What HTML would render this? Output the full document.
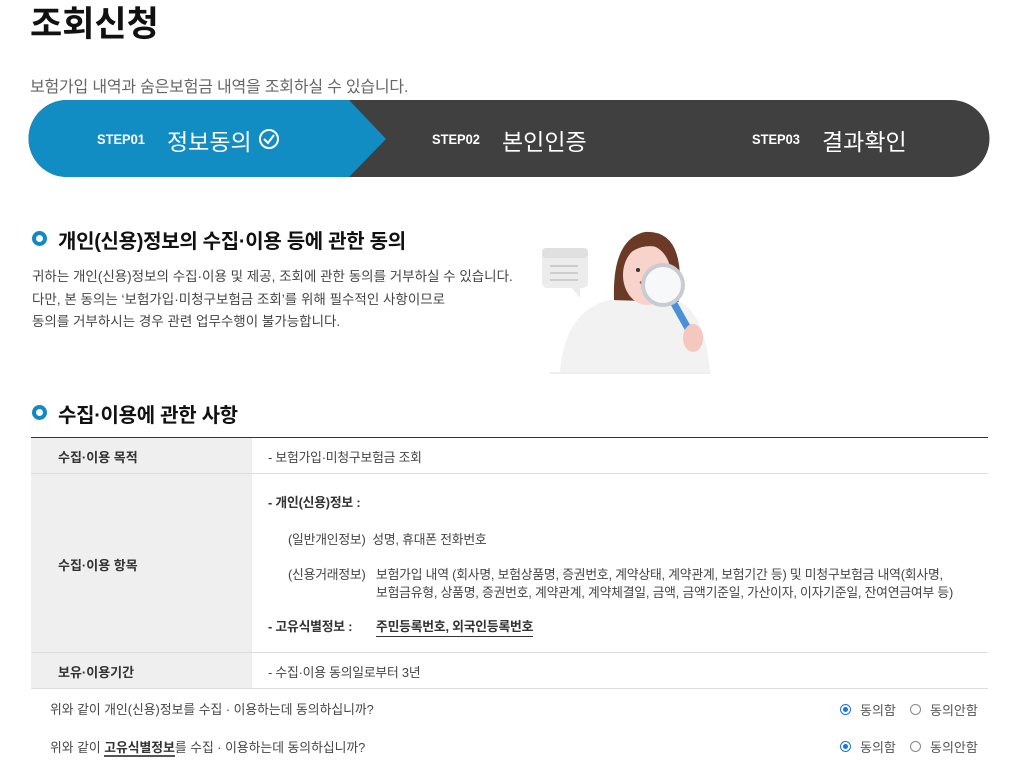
<!DOCTYPE html>
<html><head><meta charset="utf-8"><style>
*{margin:0;padding:0;box-sizing:border-box}
body{width:1024px;height:764px;overflow:hidden;background:#fff;font-family:"Liberation Sans","Noto Sans CJK KR",sans-serif;color:#222;position:relative}
.a{position:absolute;white-space:nowrap}
.h2{font-size:20px;font-weight:bold;color:#111;letter-spacing:-0.3px}
.dot{position:absolute;width:15px;height:15px;border-radius:50%;border:4px solid #0f8ac4}
.p{font-size:13px;color:#444}
.t{font-size:12.8px;color:#444;letter-spacing:-0.2px}
.lab{font-size:13px;font-weight:bold;color:#333}
.radio{position:absolute;width:11px;height:11px;border-radius:50%;border:1px solid #888;background:#fff}
.radio.on{border-color:#1a73e8}
.radio.on::after{content:"";position:absolute;left:2px;top:2px;width:5px;height:5px;border-radius:50%;background:#1a73e8}
</style></head><body>
<div class="a" style="left:30px;top:-4px;font-size:35px;font-weight:bold;color:#111">조회신청</div>
<div class="a" style="left:30px;top:73px;font-size:16px;color:#666;letter-spacing:-0.2px">보험가입 내역과 숨은보험금 내역을 조회하실 수 있습니다.</div>
<svg class="a" style="left:0;top:0" width="1024" height="190">
<path d="M67,100 H951 A38.5,38.5 0 0 1 951,177 H67 A38.5,38.5 0 0 1 67,100Z" fill="#404040"/>
<path d="M67,100 H349 L386,139 L349,177 H67 A38.5,38.5 0 0 1 67,100Z" fill="#118dc4"/>
<circle cx="269" cy="139" r="9" fill="none" stroke="#fff" stroke-width="2"/>
<path d="M264,139 L268,143 L274,135" fill="none" stroke="#fff" stroke-width="2"/>
</svg>
<div class="a" style="left:97px;top:131px;font-size:14px;font-weight:bold;color:#fff;transform:scaleX(.92);transform-origin:left">STEP01</div>
<div class="a" style="left:167px;top:123px;font-size:23px;color:#fff">정보동의</div>
<div class="a" style="left:432px;top:131px;font-size:14px;font-weight:bold;color:#fff;transform:scaleX(.92);transform-origin:left">STEP02</div>
<div class="a" style="left:502px;top:123px;font-size:23px;color:#fff">본인인증</div>
<div class="a" style="left:752px;top:131px;font-size:14px;font-weight:bold;color:#fff;transform:scaleX(.92);transform-origin:left">STEP03</div>
<div class="a" style="left:822px;top:123px;font-size:23px;color:#fff">결과확인</div>

<div class="dot" style="left:32px;top:231px"></div>
<div class="a h2" style="left:58px;top:225px">개인(신용)정보의 수집·이용 등에 관한 동의</div>
<div class="a p" style="left:32px;top:265px;font-size:13.5px">귀하는 개인(신용)정보의 수집·이용 및 제공, 조회에 관한 동의를 거부하실 수 있습니다.</div>
<div class="a p" style="left:32px;top:288px;font-size:13.5px">다만, 본 동의는 ‘보험가입·미청구보험금 조회’를 위해 필수적인 사항이므로</div>
<div class="a p" style="left:32px;top:310px;font-size:13.5px">동의를 거부하시는 경우 관련 업무수행이 불가능합니다.</div>

<svg class="a" style="left:530px;top:220px" width="190" height="160">
<rect x="12" y="28" width="46" height="40" rx="5" fill="#ececec"/>
<path d="M42,68 L50,78 L50,68Z" fill="#ececec"/>
<rect x="12" y="28" width="46" height="10" rx="4" fill="#e0e0e0"/>
<rect x="20" y="45" width="28" height="2" fill="#ccc"/><rect x="20" y="52" width="28" height="2" fill="#ccc"/><rect x="20" y="59" width="28" height="2" fill="#ccc"/>
<path d="M85,95 Q78,20 115,12 Q150,10 150,60 L148,90 Z" fill="#6b3a26"/>
<path d="M30,152 Q35,90 80,80 L150,82 Q175,95 180,152Z" fill="#f2f2f2"/>
<ellipse cx="117" cy="55" rx="24" ry="30" fill="#f7d3cc"/>
<path d="M92,40 Q115,15 145,35 Q135,22 115,20 Q95,25 92,40Z" fill="#6b3a26"/>
<circle cx="108" cy="50" r="2" fill="#333"/><circle cx="125" cy="50" r="2" fill="#333"/>
<path d="M110,62 Q116,66 122,62" stroke="#c33" stroke-width="2" fill="none"/>
<path d="M142,80 L160,112" stroke="#4a90d9" stroke-width="7" stroke-linecap="round"/>
<circle cx="133" cy="65" r="20" fill="#f6f8fa" stroke="#c8ccd2" stroke-width="4"/>
<ellipse cx="163" cy="118" rx="10" ry="14" fill="#f4c7bf"/>
<rect x="20" y="152" width="160" height="2" fill="#eee"/>
</svg>

<div class="dot" style="left:32px;top:405px"></div>
<div class="a h2" style="left:58px;top:399px">수집·이용에 관한 사항</div>

<div class="a" style="left:31px;top:437px;width:957px;height:251px;border-top:1px solid #333"></div>
<div class="a" style="left:31px;top:438px;width:221px;height:250px;background:#efefef"></div>
<div class="a" style="left:31px;top:473px;width:957px;border-top:1px solid #ddd"></div>
<div class="a" style="left:31px;top:652px;width:957px;border-top:1px solid #ddd"></div>
<div class="a" style="left:31px;top:688px;width:957px;border-top:1px solid #ddd"></div>
<div class="a lab" style="left:58px;top:447px">수집·이용 목적</div>
<div class="a lab" style="left:58px;top:555px">수집·이용 항목</div>
<div class="a lab" style="left:58px;top:662px">보유·이용기간</div>
<div class="a t" style="left:268px;top:447px">- 보험가입·미청구보험금 조회</div>
<div class="a t" style="left:268px;top:492px;font-weight:bold;color:#333">- 개인(신용)정보 :</div>
<div class="a t" style="left:288px;top:529px">(일반개인정보)&nbsp; 성명, 휴대폰 전화번호</div>
<div class="a t" style="left:288px;top:564px">(신용거래정보)</div>
<div class="a t" style="left:376px;top:564px">보험가입 내역 (회사명, 보험상품명, 증권번호, 계약상태, 계약관계, 보험기간 등) 및 미청구보험금 내역(회사명,</div>
<div class="a t" style="left:376px;top:582px">보험금유형, 상품명, 증권번호, 계약관계, 계약체결일, 금액, 금액기준일, 가산이자, 이자기준일, 잔여연금여부 등)</div>
<div class="a t" style="left:268px;top:616px;font-weight:bold;color:#333">- 고유식별정보 :</div>
<div class="a t" style="left:376px;top:616px;font-weight:bold;color:#333;border-bottom:1px solid #333;padding-bottom:1px">주민등록번호, 외국인등록번호</div>
<div class="a t" style="left:268px;top:662px">- 수집·이용 동의일로부터 3년</div>

<div class="a p" style="left:50px;top:699px;font-size:12.8px">위와 같이 개인(신용)정보를 수집 · 이용하는데 동의하십니까?</div>
<div class="a p" style="left:50px;top:737px;font-size:12.8px">위와 같이 <b style="color:#333;border-bottom:2px solid #555">고유식별정보</b>를 수집 · 이용하는데 동의하십니까?</div>
<div class="radio on" style="left:840px;top:704px"></div><div class="a p" style="left:860px;top:700px;color:#555">동의함</div>
<div class="radio" style="left:910px;top:704px"></div><div class="a p" style="left:930px;top:700px;color:#555">동의안함</div>
<div class="radio on" style="left:840px;top:741px"></div><div class="a p" style="left:860px;top:737px;color:#555">동의함</div>
<div class="radio" style="left:910px;top:741px"></div><div class="a p" style="left:930px;top:737px;color:#555">동의안함</div>
</body></html>
